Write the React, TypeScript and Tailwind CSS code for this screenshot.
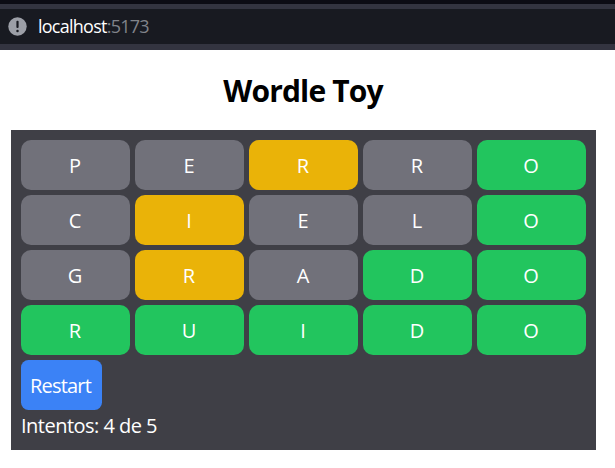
type Status = 'absent' | 'present' | 'correct';

const tileColors: Record<Status, string> = {
  absent: 'bg-[#71717a]',
  present: 'bg-[#eab308]',
  correct: 'bg-[#22c55e]',
};

const guesses: { word: string; result: Status[] }[] = [
  { word: 'PERRO', result: ['absent', 'absent', 'present', 'absent', 'correct'] },
  { word: 'CIELO', result: ['absent', 'present', 'absent', 'absent', 'correct'] },
  { word: 'GRADO', result: ['absent', 'present', 'absent', 'correct', 'correct'] },
  { word: 'RUIDO', result: ['correct', 'correct', 'correct', 'correct', 'correct'] },
];

function AddressBar() {
  return (
    <div className="h-[50px] bg-[#0c0c14] pt-1">
      <div className="h-[46px] bg-[#333440] pt-[5px] pb-[6px]">
        <div className="flex h-[35px] items-center bg-[#181a21] pl-2">
          <svg className="h-[19px] w-[19px] shrink-0" viewBox="0 0 19 19" aria-hidden="true">
            <circle cx="9.5" cy="9.5" r="9.2" fill="#9c9fa7" />
            <rect x="8.4" y="3.8" width="2.2" height="7.2" rx="1" fill="#181a21" />
            <circle cx="9.5" cy="13.9" r="1.25" fill="#181a21" />
          </svg>
          <div className="ml-[11px] pb-px text-[18px] leading-6 tracking-[-0.75px] text-[#80838a]">
            <span className="text-white">localhost</span>:5173
          </div>
        </div>
      </div>
    </div>
  );
}

export default function App() {
  return (
    <div className="h-[468px] overflow-hidden bg-white font-['Open_Sans','Noto_Sans',sans-serif]">
      <AddressBar />
      <div className="mr-[19px] ml-[11px]">
        <h1 className="pt-[21px] pr-px text-center text-[30px] leading-10 font-bold tracking-[-0.85px] text-black">
          Wordle Toy
        </h1>
        <main className="mt-[19px] h-80 bg-[#3f3f46] p-[10px] text-[20px] text-white">
          <div className="flex flex-col gap-[5px]">
            {guesses.map(({ word, result }) => (
              <div key={word} className="grid grid-cols-5 gap-[5px]">
                {word.split('').map((letter, i) => (
                  <div
                    key={i}
                    className={`flex h-[50px] items-center justify-center rounded-[10px] pt-[2px] pr-px leading-[30px] ${tileColors[result[i]]}`}
                  >
                    {letter}
                  </div>
                ))}
              </div>
            ))}
          </div>
          <button className="mt-[5px] flex h-[50px] w-[81px] items-center justify-center rounded-[7.5px] bg-[#3b82f6] pt-[2px] pr-[2px] leading-[30px] tracking-[-0.8px]">
            Restart
          </button>
          <p className="pt-px leading-[30px] tracking-[-0.52px]">Intentos: 4 de 5</p>
        </main>
      </div>
    </div>
  );
}
